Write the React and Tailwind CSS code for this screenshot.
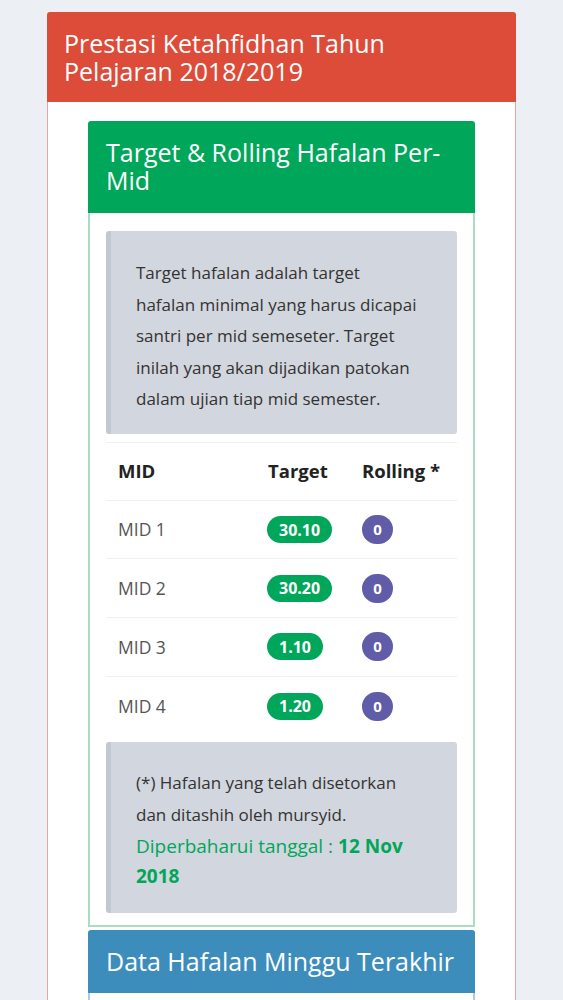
import React from 'react';

const rows = [
  { mid: 'MID 1', target: '30.10', rolling: '0' },
  { mid: 'MID 2', target: '30.20', rolling: '0' },
  { mid: 'MID 3', target: '1.10', rolling: '0' },
  { mid: 'MID 4', target: '1.20', rolling: '0' },
];

const App = () => {
  return (
    <div
      className="min-h-screen bg-[#ecf0f5] pt-3 pb-10"
      style={{ fontFamily: '"Open Sans", "Noto Sans", sans-serif' }}
    >
      <div className="mx-[47px] rounded-t-[3px] overflow-hidden">
        {/* outer card header */}
        <div className="bg-[#dd4b39] pl-[17px] pr-4 pt-[17px] pb-[17px]">
          <h3 className="text-white text-[25px] leading-[28px] max-w-[340px]">
            Prestasi Ketahfidhan Tahun Pelajaran 2018/2019
          </h3>
        </div>

        <div className="bg-white border-x border-[#e8a69c] px-10 pt-[19px] pb-6">
          {/* green card */}
          <div className="rounded-t-[3px] overflow-hidden">
            <div className="bg-[#00a65a] px-[18px] pt-[17px] pb-[19px]">
              <h3 className="text-white text-[25px] leading-[28px]">
                Target &amp; Rolling Hafalan Per-Mid
              </h3>
            </div>
            <div className="border-x-2 border-b-2 border-[#a9dcc4] px-4 pt-[18px] pb-[12px]">
              <div className="bg-[#d2d6de] border-l-[5px] border-[#c3c8d0] rounded-[3px] pl-[25px] pr-[40px] pt-[26px] pb-[19px]">
                <p className="text-[#333] text-[17px] leading-[31.5px] max-w-[282px]">
                  Target hafalan adalah target hafalan minimal yang harus dicapai santri per mid semeseter.
                  Target inilah yang akan dijadikan patokan dalam ujian tiap mid semester.
                </p>
              </div>

              <div className="mt-[8px] border-t border-[#f0f0f0]">
                <div className="grid grid-cols-[150px_94px_1fr] h-[58px] items-center border-b border-[#f0f0f0] text-[18.5px] font-bold text-[#222]">
                  <div className="pl-3">MID</div>
                  <div className="pl-3">Target</div>
                  <div className="pl-3">Rolling *</div>
                </div>
                {rows.map((r, i) => (
                  <div
                    key={r.mid}
                    className={
                      'grid grid-cols-[150px_94px_1fr] items-center text-[17.5px] text-[#555] ' +
                      (i < rows.length - 1 ? 'h-[58.7px] border-b border-[#f0f0f0]' : 'h-[59px]')
                    }
                  >
                    <div className="pl-3">{r.mid}</div>
                    <div className="pl-[11px]">
                      <span className="inline-flex items-center h-[27px] px-[12px] rounded-full bg-[#00a65a] text-white text-[16px] font-bold">
                        {r.target}
                      </span>
                    </div>
                    <div className="pl-[12px]">
                      <span className="inline-flex items-center justify-center w-[31px] h-[29px] rounded-full bg-[#605ca8] text-white text-[15px] font-bold">
                        {r.rolling}
                      </span>
                    </div>
                  </div>
                ))}
              </div>

              <div className="mt-[6px] bg-[#d2d6de] border-l-[5px] border-[#c3c8d0] rounded-[3px] pl-[25px] pr-[40px] pt-[25px] pb-[22px]">
                <p className="text-[#333] text-[17px] leading-[32px] max-w-[282px]">
                  (*) Hafalan yang telah disetorkan dan ditashih oleh mursyid.
                </p>
                <p className="text-[#00a65a] text-[19px] leading-[30px] max-w-[282px]">
                  Diperbaharui tanggal : <span className="font-bold">12 Nov</span>{' '}
                  <span className="font-bold">2018</span>
                </p>
              </div>
            </div>
          </div>

          {/* blue card */}
          <div className="mt-[3px] rounded-t-[3px] overflow-hidden">
            <div className="bg-[#3c8dbc] px-[18px] h-[63px] flex items-center">
              <h3 className="text-white text-[25px] leading-[28px]">Data Hafalan Minggu Terakhir</h3>
            </div>
            <div className="border-x-2 border-b-2 border-[#a8cde3] h-[200px]" />
          </div>
        </div>
      </div>
    </div>
  );
};

export default App;
